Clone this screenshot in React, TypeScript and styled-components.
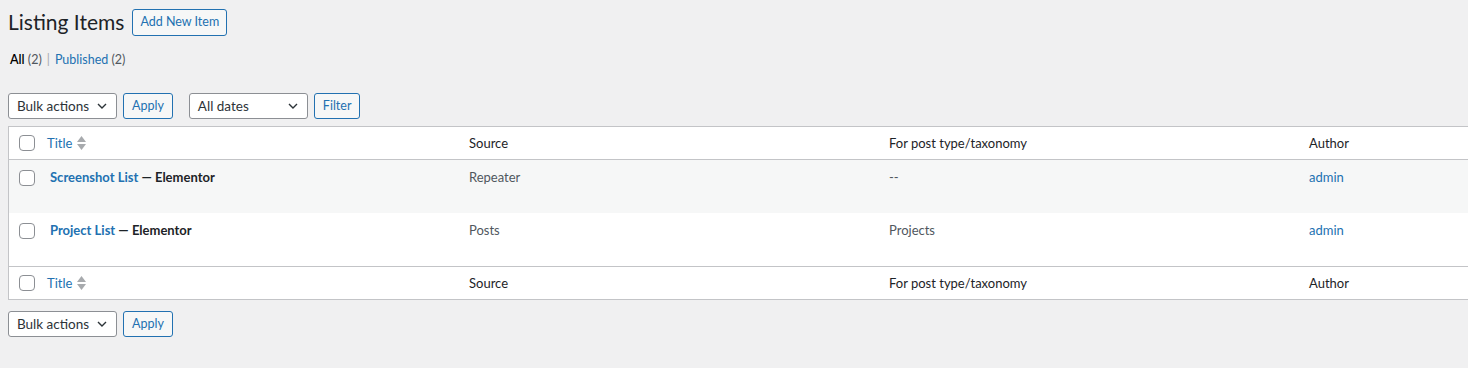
import React from "react";
import styled, { createGlobalStyle } from "styled-components";

const GlobalStyle = createGlobalStyle`
  html, body {
    margin: 0;
    padding: 0;
    background: #f0f0f1;
    overflow: hidden;
  }
  body {
    font-family: Lato, "Noto Sans", sans-serif;
    font-size: 13px;
    color: #3c434a;
  }
`;

interface IListingItem {
    id: number,
    title: string,
    source: string,
    forType: string,
    author: string
}

const items: IListingItem[] = [
    { id: 1, title: 'Screenshot List', source: 'Repeater', forType: '--', author: 'admin' },
    { id: 2, title: 'Project List', source: 'Posts', forType: 'Projects', author: 'admin' },
]

const Chevron = () => (
    <svg width="10" height="6" viewBox="0 0 10 6">
        <path d="M1 1l4 4 4-4" fill="none" stroke="#2c3338" strokeWidth="1.4" />
    </svg>
)

const SortIcon = () => (
    <svg width="9" height="14" viewBox="0 0 9 14">
        <path d="M4.5 0L9 6H0z" fill="#a7aaad" />
        <path d="M4.5 14L9 8H0z" fill="#a7aaad" />
    </svg>
)

const Select: React.FC<{ label: string, width: number }> = ({ label, width }) => (
    <SelectBox $width={width}>
        <span>{label}</span>
        <Chevron />
    </SelectBox>
)

const TableNav: React.FC<{ withFilter?: boolean }> = ({ withFilter }) => (
    <NavRow>
        <Select label='Bulk actions' width={109} />
        <Button>Apply</Button>
        {withFilter && <>
            <Spacer />
            <Select label='All dates' width={119} />
            <Button>Filter</Button>
        </>}
    </NavRow>
)

const HeadRow: React.FC<{ foot?: boolean }> = ({ foot }) => (
    <tr>
        <CheckCell as='th' $head $foot={foot}><Check /></CheckCell>
        <Th $foot={foot}><SortLink>Title <SortIcon /></SortLink></Th>
        <Th $foot={foot}>Source</Th>
        <Th $foot={foot}>For post type/taxonomy</Th>
        <Th $foot={foot}>Author</Th>
    </tr>
)

const App: React.FC = () => {
    return (
        <>
            <GlobalStyle />
            <Wrap>
                <TitleRow>
                    <Heading>Listing Items</Heading>
                    <Button $tall>Add New Item</Button>
                </TitleRow>
                <SubSub>
                    <Current>All</Current> <Count>(2)</Count>
                    <Sep>|</Sep>
                    <Link>Published <Count>(2)</Count></Link>
                </SubSub>
                <TopNav>
                    <TableNav withFilter />
                </TopNav>
                <Table>
                    <colgroup>
                        <col style={{ width: 31 }} />
                        <col style={{ width: 419 }} />
                        <col style={{ width: 420 }} />
                        <col style={{ width: 420 }} />
                        <col style={{ width: 420 }} />
                    </colgroup>
                    <thead><HeadRow /></thead>
                    <tbody>
                        {items.map((item, i) => (
                            <Row key={item.id} $alt={i % 2 === 0}>
                                <CheckCell><Check /></CheckCell>
                                <Td>
                                    <RowTitle><TitleLink>{item.title}</TitleLink> — Elementor</RowTitle>
                                </Td>
                                <Td>{item.source}</Td>
                                <Td>{item.forType}</Td>
                                <Td><Link>{item.author}</Link></Td>
                            </Row>
                        ))}
                    </tbody>
                    <tfoot><HeadRow foot /></tfoot>
                </Table>
                <BottomNav>
                    <TableNav />
                </BottomNav>
            </Wrap>
        </>
    )
}

const Wrap = styled.div`
    padding: 7px 0 0 8px;
`;

const TitleRow = styled.div`
    display: flex;
    align-items: center;
    gap: 8px;
`;

const Heading = styled.h1`
    margin: 0;
    font-size: 21px;
    font-weight: 400;
    line-height: 30px;
    color: #1d2327;
`;

const Button = styled.button<{ $tall?: boolean }>`
    font-family: inherit;
    font-size: 12.5px;
    height: ${p => p.$tall ? 27 : 26}px;
    padding: 0 ${p => p.$tall ? 7 : 8}px;
    line-height: 1;
    color: #2271b1;
    border: 1px solid #2271b1;
    border-radius: 3px;
    background: #f6f7f7;
    box-sizing: border-box;
`;

const SubSub = styled.div`
    margin-top: 14px;
    line-height: 18px;
    font-size: 12.5px;
    color: #646970;
    padding-left: 2px;
`;

const Current = styled.span`
    color: #000;
    font-weight: 600;
`;

const Count = styled.span`
    color: #50575e;
`;

const Sep = styled.span`
    margin: 0 5px;
    color: #a7aaad;
`;

const Link = styled.span`
    color: #2271b1;
`;

const TopNav = styled.div`
    margin-top: 24px;
`;

const NavRow = styled.div`
    display: flex;
    align-items: center;
    gap: 6px;
    height: 26px;
`;

const Spacer = styled.div`
    width: 4px;
`;

const SelectBox = styled.div<{ $width: number }>`
    width: ${p => p.$width}px;
    height: 26px;
    box-sizing: border-box;
    display: flex;
    align-items: center;
    justify-content: space-between;
    padding: 0 9px 0 8px;
    font-size: 13.5px;
    color: #2c3338;
    background: #fff;
    border: 1px solid #8c8f94;
    border-radius: 3px;
`;

const Table = styled.table`
    margin-top: 7px;
    table-layout: fixed;
    width: 1710px;
    border-collapse: separate;
    border-spacing: 0;
    background: #fff;
    border: 1px solid #c3c4c7;
`;

const Th = styled.th<{ $foot?: boolean }>`
    text-align: left;
    font-weight: 400;
    font-size: 13px;
    color: #1d2327;
    height: 32px;
    padding: 0 10px;
    ${p => p.$foot ? 'border-top: 1px solid #c3c4c7;' : 'border-bottom: 1px solid #c3c4c7;'}
`;

const CheckCell = styled.td<{ $head?: boolean, $foot?: boolean }>`
    padding: ${p => p.$head ? '0 0 0 10px' : '10px 0 0 10px'};
    vertical-align: ${p => p.$head ? 'middle' : 'top'};
    text-align: left;
    ${p => p.$head && (p.$foot ? 'border-top: 1px solid #c3c4c7;' : 'border-bottom: 1px solid #c3c4c7;')}
`;

const Check = styled.span`
    display: block;
    width: 14px;
    height: 14px;
    border: 1px solid #8c8f94;
    border-radius: 4px;
    background: #fff;
`;

const SortLink = styled.span`
    display: inline-flex;
    align-items: center;
    gap: 5px;
    color: #2271b1;
    font-size: 13px;
    margin-left: -3px;
`;

const Row = styled.tr<{ $alt: boolean }>`
    background: ${p => p.$alt ? '#f6f7f7' : '#fff'};
    height: 53px;
`;

const Td = styled.td`
    vertical-align: top;
    padding: 7px 10px 8px;
    font-size: 13px;
    line-height: 20px;
    color: #50575e;
`;

const RowTitle = styled.strong`
    font-size: 13px;
    font-weight: 700;
    color: #1d2327;
`;

const TitleLink = styled.span`
    color: #2271b1;
`;

const BottomNav = styled.div`
    margin-top: 11px;
`;

export default App
